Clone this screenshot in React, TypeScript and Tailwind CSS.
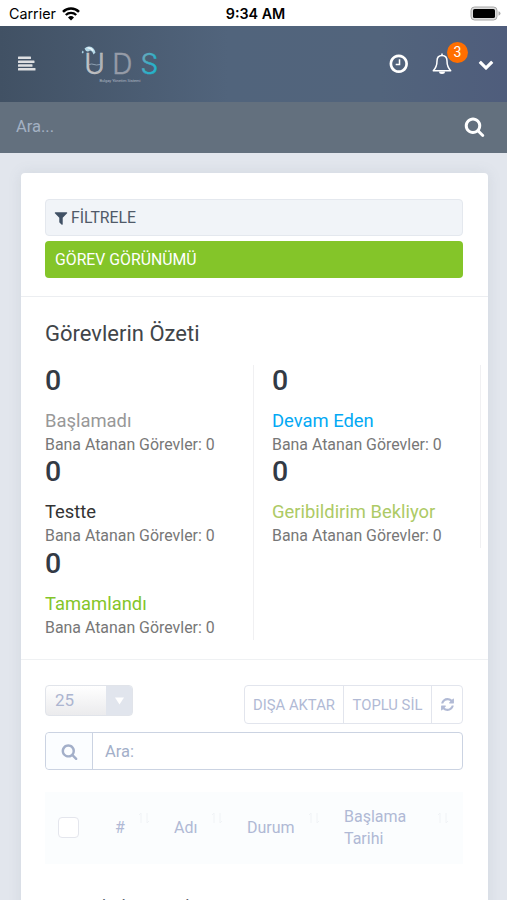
import clsx from "clsx";

type IconProps = { d: string; className?: string };

const Icon = ({ d, className }: IconProps) => (
  <svg viewBox="0 0 1792 1792" fill="currentColor" className={clsx("shrink-0", className)}>
    <path d={d} />
  </svg>
);

const clockPath =
  "M1024 544v448q0 14-9 23t-23 9h-320q-14 0-23-9t-9-23v-64q0-14 9-23t23-9h224v-352q0-14 9-23t23-9h64q14 0 23 9t9 23zm416 352q0-148-73-273t-198-198-273-73-273 73-198 198-73 273 73 273 198 198 273 73 273-73 198-198 73-273zm224 0q0 209-103 385.5t-279.5 279.5-385.5 103-385.5-103-279.5-279.5-103-385.5 103-385.5 279.5-279.5 385.5-103 385.5 103 279.5 279.5 103 385.5z";
const searchPath =
  "M1216 832q0-185-131.5-316.5t-316.5-131.5-316.5 131.5-131.5 316.5 131.5 316.5 316.5 131.5 316.5-131.5 131.5-316.5zm512 832q0 52-38 90t-90 38q-54 0-90-38l-343-342q-179 124-399 124-143 0-273.5-55.5t-225-150-150-225-55.5-273.5 55.5-273.5 150-225 225-150 273.5-55.5 273.5 55.5 225 150 150 225 55.5 273.5q0 220-124 399l343 343q37 37 37 90z";
const refreshPath =
  "M1639 1056q0 5-1 7-64 268-268 434.5t-478 166.5q-146 0-282.5-55t-243.5-157l-129 129q-19 19-45 19t-45-19-19-45v-448q0-26 19-45t45-19h448q26 0 45 19t19 45-19 45l-137 137q71 66 161 102t187 36q134 0 250-65t186-179q11-17 53-117 8-23 30-23h192q13 0 22.5 9.5t9.5 22.5zm25-800v448q0 26-19 45t-45 19h-448q-26 0-45-19t-19-45 19-45l138-138q-148-137-349-137-134 0-250 65t-186 179q-11 17-53 117-8 23-30 23h-199q-13 0-22.5-9.5t-9.5-22.5v-7q65-268 270-434.5t480-166.5q146 0 284 55.5t245 156.5l130-129q19-19 45-19t45 19 19 45z";
const filterPath =
  "M1595 295q17 41-14 70l-493 493v742q0 42-39 59-13 5-25 5-27 0-45-19l-256-256q-19-19-19-45v-486l-493-493q-31-29-14-70 17-39 59-39h1280q42 0 59 39z";
const chevronPath =
  "M1683 808l-742 741q-19 19-45 19t-45-19l-742-741q-19-19-19-45.5t19-45.5l166-165q19-19 45-19t45 19l531 531 531-531q19-19 45-19t45 19l166 165q19 19 19 45.5t-19 45.5z";

const StatusBar = () => (
  <div className="grid h-[26px] shrink-0 grid-cols-3 items-center bg-white pl-[9px] pr-[6px] pt-[2px] font-['Inter'] text-[14.3px] text-black">
    <div className="flex items-center gap-[6px]">
      <span>Carrier</span>
      <svg viewBox="0 0 18 14" className="h-[14px] w-[18px]">
        <path d="M1 4.8A11.3 11.3 0 0 1 17 4.8" fill="none" stroke="#000" strokeWidth="2.5" />
        <path d="M3.8 8A7.4 7.4 0 0 1 14.2 8" fill="none" stroke="#000" strokeWidth="2.3" />
        <path d="M9 13.5 6 10.4a4.3 4.3 0 0 1 6 0Z" />
      </svg>
    </div>
    <span className="pl-px text-center font-semibold">9:34 AM</span>
    <svg viewBox="0 0 31 15" className="mb-px h-[15px] w-[31px] justify-self-end">
      <rect x="1" y="1" width="26" height="13" rx="3.5" fill="#ddd" stroke="#a8a8a8" />
      <rect x="3" y="3" width="22" height="9" rx="1.6" />
      <path d="M28.5 5.3q2 .6 2 2.2t-2 2.2Z" fill="#aaa" />
    </svg>
  </div>
);

const Logo = () => (
  <svg viewBox="0 0 90 50" className="ml-[40px] h-[50px] w-[90px]">
    <defs>
      <linearGradient id="u" x1="0" y1="0" x2="1" y2="0">
        <stop offset="0" stopColor="#c9c9cb" />
        <stop offset="1" stopColor="#a9abb0" />
      </linearGradient>
      <linearGradient id="s" x1="0" y1="0" x2="1" y2="1">
        <stop offset="0" stopColor="#8aa5b4" />
        <stop offset="0.55" stopColor="#2db0c8" />
        <stop offset="1" stopColor="#1ab8d2" />
      </linearGradient>
    </defs>
    <g fontFamily="Inter" fontSize="28" fontWeight="300" strokeWidth="0.5">
      <text x="8.3" y="35.3" fill="url(#u)" stroke="#c4c4c6">U</text>
      <text x="36.3" y="35.3" fill="#969ca8" stroke="#969ca8">D</text>
      <text x="64.5" y="35.3" fill="url(#s)" stroke="url(#s)">S</text>
    </g>
    <path d="M13 25.5q3-1 5 0t6 0" fill="none" stroke="#9fb2c4" strokeWidth="0.8" />
    <path d="M8.500 9.500q2.500-2.500 5-2 4.500.500 6 6l-2 2q-1-3.500-3.500-4-2 1.500-4 .500Z" fill="#b4d8e7" />
    <path d="M6.800 11.500q1.400 1.300.6 2.500-1 .8-1.600-.3-.2-1 1-2.200Z" fill="#a9d2e4" />
    <path d="M11.500 8.800q3.500-.3 5.500 3" fill="none" stroke="#f0f8fb" strokeWidth="1.200" />
    <text x="23.500" y="43.200" textLength="41" fontFamily="Roboto" fontSize="4" fill="#aeb5c2">Bulgay Yönetim Sistemi</text>
  </svg>
);

const Header = () => (
  <header className="shrink-0">
    <div className="flex h-[76px] items-center bg-[linear-gradient(to_right,#415164_0%,#51647c_45%,#52647c_75%,#4f5d7c_100%)] pl-[18px] pr-[13px] text-white">
      <svg viewBox="0 0 18 16" className="h-4 w-[18px]" fill="#dedfe2">
        <rect x="0" y="0.500" width="13" height="2.600" rx="0.600" />
        <rect x="0" y="4.400" width="16.500" height="2.600" rx="0.600" />
        <rect x="0" y="8.200" width="14.500" height="2.600" rx="0.600" />
        <rect x="0" y="12" width="17.500" height="2.600" rx="0.600" />
      </svg>
      <Logo />
      <div className="ml-auto flex items-center">
        <Icon d={clockPath} className="h-[21.500px] w-[21.500px]" />
        <div className="relative ml-[23px]">
          <svg viewBox="0 0 20 22" className="h-[22px] w-5" fill="none" stroke="#fff" strokeWidth="1.500">
            <path d="M10 2.400c-3.400 0-5 2.600-5 5.600 0 4.600-1.300 7.200-3.700 9.700h17.400C16.300 15.200 15 12.600 15 8c0-3-1.600-5.600-5-5.600Z" strokeLinejoin="round" />
            <path d="M10 .6v1.600" />
            <path d="M7 18.600a3 2.500 0 0 0 6 0Z" fill="#fff" stroke="none" />
          </svg>
          <span className="absolute -top-[11px] left-[15px] flex h-[21px] w-[21px] items-center justify-center rounded-full bg-[#ff6f00] text-[14px]">3</span>
        </div>
        <Icon d={chevronPath} className="ml-[26px] h-4 w-4" />
      </div>
    </div>
    <div className="flex h-[51px] items-center justify-between bg-[#63707e] pl-4 pr-[22.500px]">
      <span className="text-[16.500px] text-[#a3b1c3]">Ara...</span>
      <Icon d={searchPath} className="mb-[3px] h-[21px] w-[21px] text-white" />
    </div>
  </header>
);

type Stat = { label: string; color: string };

const leftStats: Stat[] = [
  { label: "Başlamadı", color: "text-[#989898]" },
  { label: "Testte", color: "text-[#333333]" },
  { label: "Tamamlandı", color: "text-[#84c529]" },
];

const rightStats: Stat[] = [
  { label: "Devam Eden", color: "text-[#03a9f4]" },
  { label: "Geribildirim Bekliyor", color: "text-[#adca65]" },
];

const StatColumn = ({ stats }: { stats: Stat[] }) => (
  <div className="self-start border-r border-[#f0f0f2]">
    {stats.map(({ label, color }) => (
      <div key={label} className="h-[91.700px]">
        <p className="h-[43px] text-[28.500px] leading-[31px] font-medium text-[#323a45]">0</p>
        <p className={clsx("h-[25px] text-[18.400px] leading-[26px]", color)}>{label}</p>
        <p className="text-[15.900px] leading-[23px] text-[#777777]">Bana Atanan Görevler: 0</p>
      </div>
    ))}
  </div>
);

const Toolbar = () => (
  <>
    <div className="flex items-start justify-between">
      <div className="flex h-[31px] w-[88px] overflow-hidden rounded border border-[#e1e4ea] bg-linear-to-b from-white to-[#ebebed] text-[17px] text-[#acb5d0]">
        <span className="flex-1 pl-[9px] leading-[29px]">25</span>
        <span className="flex w-[26px] items-center justify-center bg-[#e1e5ed]">
          <svg viewBox="0 0 10 8" className="h-2 w-[9px]" fill="#fff">
            <path d="M0 0h10L5 8Z" />
          </svg>
        </span>
      </div>
      <div className="flex h-[39px] w-[219px] divide-x divide-[#e2e5ed] rounded border border-[#e2e5ed] text-[14.800px] leading-[39px] text-[#b1bad5]">
        <span className="w-[99px] text-center">DIŞA AKTAR</span>
        <span className="w-[88px] text-center">TOPLU SİL</span>
        <span className="flex flex-1 items-center justify-center">
          <Icon d={refreshPath} className="h-[15px] w-[15px]" />
        </span>
      </div>
    </div>
    <div className="mt-2 flex h-[38px] rounded border border-[#cbd3e2] text-[#a3afc9]">
      <span className="flex w-[47px] items-center justify-center rounded-l border-r border-[#cbd3e2] bg-[#fbfdff]">
        <Icon d={searchPath} className="h-[17px] w-[17px]" />
      </span>
      <span className="pl-3 text-[16.500px] leading-[37px]">Ara:</span>
    </div>
  </>
);

const SortMark = ({ className }: { className?: string }) => (
  <svg viewBox="0 0 12 12" className={clsx("h-3 w-3", className)} stroke="#f0f3f6" fill="none">
    <path d="M3 1v10M1 3l2-2M9 1v10M9 11l2-2" />
  </svg>
);

const TableHead = () => (
  <div className="mt-[22px] flex h-[72px] items-center bg-[#fbfdfe] pl-[13px] text-[16px] text-[#b0b9d5]">
    <span className="mb-[2px] h-[21px] w-[21px] rounded border border-[#e4e6ed] bg-white" />
    <span className="ml-[36px] w-[23px]">#</span>
    <SortMark className="mb-5" />
    <span className="ml-[24px] w-[37px]">Adı</span>
    <SortMark className="mb-5" />
    <span className="ml-[24px] w-[61px]">Durum</span>
    <SortMark className="mb-5" />
    <span className="ml-[24px] w-[93px] leading-[22px]">
      Başlama
      <br />
      Tarihi
    </span>
    <SortMark className="mb-5" />
  </div>
);

const App = () => {
  return (
    <div className="flex h-[900px] w-[507px] flex-col overflow-hidden bg-[#e2e6ed] font-['Roboto',sans-serif]">
      <StatusBar />
      <Header />
      <main className="pl-[20.500px] pr-[19.500px] pt-[20px]">
        <div className="h-[760px] rounded-t bg-white shadow-[0_0_14px_rgba(100,115,135,0.13)]">
          <div className="h-[124px] border-b border-[#eceef1] px-[24.500px] pt-[26px]">
            <div className="flex h-[37px] items-center gap-[2px] rounded border border-[#e4e8ee] bg-[#f1f4f8] pl-[7px] text-[15.800px] text-[#505a69]">
              <Icon d={filterPath} className="h-4 w-4 text-[#415165]" />
              <span>FİLTRELE</span>
            </div>
            <div className="mt-[5px] h-[37px] rounded bg-[#84c529] pl-[10px] text-[15.800px] leading-[37px] text-white">GÖREV GÖRÜNÜMÜ</div>
          </div>
          <section className="h-[363px] border-b border-[#eff1f3] pt-[22.600px]">
            <h4 className="pl-[24.500px] text-[22px] leading-[28px] text-[#414549]">Görevlerin Özeti</h4>
            <div className="mt-[17px] grid grid-cols-[209px_209px] gap-x-[18px] pl-[24.500px]">
              <StatColumn stats={leftStats} />
              <StatColumn stats={rightStats} />
            </div>
          </section>
          <section className="px-[24.500px] pt-[25px]">
            <Toolbar />
            <TableHead />
            <p className="mt-[32px] pl-[14px] text-[17.500px] leading-[22px] text-[#5c6570]">Kayıt bulunamadı</p>
          </section>
        </div>
      </main>
    </div>
  );
};

export default App;
